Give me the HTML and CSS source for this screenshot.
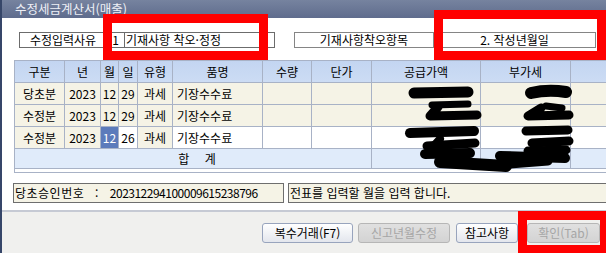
FILE: index.html
```html
<!DOCTYPE html>
<html lang="ko">
<head>
<meta charset="utf-8">
<title>수정세금계산서(매출)</title>
<link rel="stylesheet" href="styles.css">
</head>
<body>
<div class="window">
  <div class="titlebar">수정세금계산서(매출)</div>
  <div class="main">
    <div class="toprow">
      <div class="field f1">
        <div class="cell lbl1">수정입력사유</div>
        <div class="cell code">1</div>
        <div class="cell val1">기재사항 착오·정정</div>
      </div>
      <div class="field f2">
        <div class="cell lbl2">기재사항착오항목</div>
        <div class="cell val2">2. 작성년월일</div>
      </div>
    </div>

    <div class="grid">
      <div class="g h">구분</div>
      <div class="g h">년</div>
      <div class="g h">월</div>
      <div class="g h">일</div>
      <div class="g h">유형</div>
      <div class="g h">품명</div>
      <div class="g h">수량</div>
      <div class="g h">단가</div>
      <div class="g h">공급가액</div>
      <div class="g h">부가세</div>
      <div class="g h"></div>

      <div class="g b">당초분</div>
      <div class="g b">2023</div>
      <div class="g b">12</div>
      <div class="g b">29</div>
      <div class="g b">과세</div>
      <div class="g b l">기장수수료</div>
      <div class="g b"></div>
      <div class="g b"></div>
      <div class="g b"></div>
      <div class="g b"></div>
      <div class="g b"></div>

      <div class="g b">수정분</div>
      <div class="g b">2023</div>
      <div class="g b">12</div>
      <div class="g b">29</div>
      <div class="g b">과세</div>
      <div class="g b l">기장수수료</div>
      <div class="g b"></div>
      <div class="g b"></div>
      <div class="g b"></div>
      <div class="g b"></div>
      <div class="g b"></div>

      <div class="g b">수정분</div>
      <div class="g b">2023</div>
      <div class="g sel">12</div>
      <div class="g w">26</div>
      <div class="g b">과세</div>
      <div class="g w l">기장수수료</div>
      <div class="g w"></div>
      <div class="g w"></div>
      <div class="g w"></div>
      <div class="g w"></div>
      <div class="g w"></div>

      <div class="g s total">합 계</div>
      <div class="g s"></div>
      <div class="g s"></div>
      <div class="g s"></div>
    </div>

    <div class="inforow">
      <div class="info i1"><span class="ilbl">당초승인번호 : </span><span class="num">202312294100009615238796</span></div>
      <div class="info i2">전표를 입력할 월을 입력 합니다.</div>
    </div>
  </div>

  <div class="footer">
    <button class="btn b1">복수거래(F7)</button>
    <button class="btn b2 disabled">신고년월수정</button>
    <button class="btn b3">참고사항</button>
    <button class="btn b4 disabled">확인(Tab)</button>
  </div>
</div>

<svg class="overlay" width="606" height="253" viewBox="0 0 606 253">
  <g class="ink" fill="none" stroke="#000" stroke-linecap="round" stroke-linejoin="round">
    <path stroke-width="11" d="M414 93 L468 92"/>
    <path stroke-width="12" d="M531 93 Q548 89 566 92"/>
    <path stroke-width="7" d="M432 105 L468 104"/>
    <path stroke-width="9" d="M438 107 L430 116 L477 115"/>
    <path stroke-width="9" d="M541 108 L528 116 L569 115"/>
    <path stroke-width="7" d="M546 106 L562 108"/>
    <path stroke-width="10" d="M410 133 L474 131"/>
    <path stroke-width="9" d="M427 146 L475 143"/>
    <path stroke-width="8" d="M440 139 L430 150"/>
    <path stroke-width="9" d="M526 131 L568 130"/>
    <path stroke-width="9" d="M532 143 L569 141"/>
    <path stroke-width="9" d="M528 151 L566 150"/>
    <path stroke-width="10" d="M425 154 L470 153"/>
    <path stroke-width="12" d="M440 162 L506 166"/>
    <path stroke-width="10" d="M500 156 L565 158"/>
    <path stroke-width="9" d="M498 165 L548 161"/>
  </g>
  <g fill="none" stroke="#ff0000" stroke-width="9">
    <rect x="107.5" y="18.5" width="156" height="37"/>
    <rect x="438.5" y="14.5" width="163" height="41"/>
    <rect x="522.5" y="215.5" width="82" height="34"/>
  </g>
</svg>
</body>
</html>
```

FILE: styles.css
```css
html, body {
  margin: 0;
  padding: 0;
}
body {
  position: relative;
  width: 606px;
  height: 253px;
  overflow: hidden;
  background: #ffffff;
  font-family: "Noto Sans CJK KR", "Noto Sans", sans-serif;
  font-size: 12px;
  color: #000;
}
.window {
  width: 606px;
  height: 253px;
  box-sizing: border-box;
  border-left: 2px solid #364669;
  display: flex;
  flex-direction: column;
  overflow: hidden;
}
.titlebar {
  flex: none;
  height: 18px;
  line-height: 17px;
  padding-left: 13px;
  font-size: 12.5px;
  color: #eef0f6;
  background: linear-gradient(to bottom, #76839f, #5f6c8d);
  white-space: nowrap;
}
.main {
  flex: none;
  height: 194px;
  box-sizing: border-box;
  padding-top: 14px;
  background: #ffffff;
  border-bottom: 2px solid #c6cad4;
}
.toprow {
  display: flex;
  height: 16px;
  margin-left: 17px;
}
.field {
  display: flex;
  height: 16px;
  box-sizing: border-box;
  border: 1px solid #6c6c6c;
  background: #ffffff;
}
.f2 {
  margin-left: 19px;
  border-color: #858585;
}
.cell {
  height: 14px;
  display: flex;
  align-items: center;
  line-height: 14px;
  white-space: nowrap;
}
.lbl1 { width: 86px; justify-content: center; }
.code { width: 17px; border-left: 1px solid #6c6c6c; justify-content: center; }
.val1 { width: 150px; border-left: 1px solid #6c6c6c; padding-left: 1px; box-sizing: border-box; }
.lbl2 { width: 138px; justify-content: center; }
.val2 { width: 161px; border-left: 1px solid #858585; justify-content: center; }

.grid {
  display: grid;
  grid-template-columns: 50px 36px 18px 19px 35px 90px 49px 60px 109px 90px 40px;
  grid-template-rows: 22px 22px 22px 22px 20px;
  width: 597px;
  box-sizing: border-box;
  margin: 12px 0 0 12px;
  border-top: 1px solid #a8b2c6;
  border-left: 1px solid #a8b2c6;
  border-bottom: 1px solid #a8b2c6;
  padding-bottom: 3px;
}
.g {
  box-sizing: border-box;
  border-right: 1px solid #a8b2c6;
  border-bottom: 1px solid #a8b2c6;
  display: flex;
  align-items: center;
  justify-content: center;
  line-height: 14px;
  white-space: nowrap;
}
.h { background: linear-gradient(to bottom, #c3d5f1, #ccdcf4); }
.b { background: #f5f3e6; }
.w { background: #ffffff; }
.sel { background: #5c7bbb; color: #ffffff; }
.s { background: #e0ebfa; }
.l { justify-content: flex-start; padding-left: 4px; }
.total {
  grid-column: 1 / 9;
  word-spacing: 12px;
  padding-left: 8px;
}

.inforow {
  display: flex;
  margin: 10px 0 0 11px;
  height: 20px;
}
.info {
  flex: none;
  height: 20px;
  box-sizing: border-box;
  border: 1px solid #6e6e6e;
  background: #f5f3e6;
  line-height: 18px;
  padding-left: 1px;
  white-space: nowrap;
}
.i1 { width: 271px; }
.i2 { width: 330px; margin-left: 4px; }
.ilbl {
  letter-spacing: 0.5px;
  word-spacing: 7px;
}
.num {
  letter-spacing: -0.5px;
}

.footer {
  flex: 1;
  display: flex;
  justify-content: flex-end;
  align-items: flex-start;
  padding: 11px 6px 0 0;
  background: #f0f0ee;
}
.btn {
  height: 20px;
  margin: 0;
  padding: 0;
  box-sizing: border-box;
  border: 1px solid #98a4bd;
  border-radius: 3px;
  background: linear-gradient(to bottom, #ffffff, #e3e6ed);
  font-family: "Noto Sans CJK KR", "Noto Sans", sans-serif;
  font-size: 12px;
  line-height: 16px;
  color: #000;
  white-space: nowrap;
}
.btn.disabled {
  background: linear-gradient(to bottom, #e0e0e0, #d3d3d3);
  border-color: #b6b6b6;
  color: #a6a6a6;
}
.b1 { width: 91px; }
.b2 { width: 92px; margin-left: 5px; }
.b3 { width: 62px; margin-left: 6px; }
.b4 { width: 73px; margin-left: 9px; }

.overlay {
  position: absolute;
  left: 0;
  top: 0;
  pointer-events: none;
}
```
